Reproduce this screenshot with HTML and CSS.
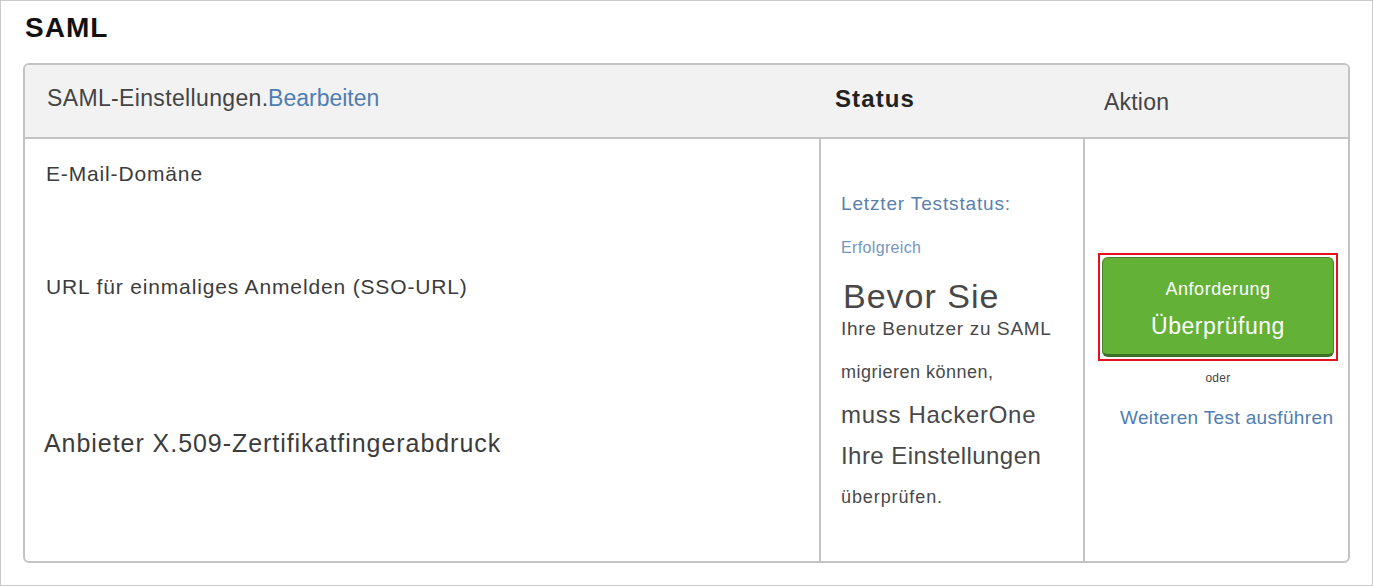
FILE: index.html
```html
<!DOCTYPE html>
<html lang="de">
<head>
<meta charset="utf-8">
<title>SAML</title>
<link rel="stylesheet" href="styles.css">
</head>
<body>
<div class="frame">
  <h1 class="title">SAML</h1>
  <div class="card">
    <div class="head">
      <div class="hc hc1">SAML-Einstellungen<span class="dot">.</span><a class="link edit">Bearbeiten</a></div>
      <div class="hc hc2">Status</div>
      <div class="hc hc3">Aktion</div>
    </div>
    <div class="body">
      <div class="cell c1">
        <div class="field f1">E-Mail-Domäne</div>
        <div class="field f2">URL für einmaliges Anmelden (SSO-URL)</div>
        <div class="field f3">Anbieter X.509-Zertifikatfingerabdruck</div>
      </div>
      <div class="cell c2">
        <div class="s s1">Letzter Teststatus:</div>
        <div class="s s2">Erfolgreich</div>
        <div class="s s3">Bevor Sie</div>
        <div class="s s4">Ihre Benutzer zu SAML</div>
        <div class="s s5">migrieren können,</div>
        <div class="s s6">muss HackerOne</div>
        <div class="s s7">Ihre Einstellungen</div>
        <div class="s s8">überprüfen.</div>
      </div>
      <div class="cell c3">
        <div class="redbox">
          <div class="btn">
            <span class="b1">Anforderung</span>
            <span class="b2">Überprüfung</span>
          </div>
        </div>
        <div class="oder">oder</div>
        <a class="link weiter">Weiteren Test ausführen</a>
      </div>
    </div>
  </div>
</div>
</body>
</html>
```

FILE: styles.css
```css
html, body {
  margin: 0;
  padding: 0;
  background: #ffffff;
}

body {
  font-family: "Liberation Sans", Arial, sans-serif;
  color: #444444;
}

.frame {
  width: 1373px;
  height: 586px;
  box-sizing: border-box;
  border: 1px solid #cacaca;
  padding: 0 22px;
}

.title {
  margin: 12px 0 20px 2px;
  font-size: 28px;
  line-height: 30px;
  font-weight: bold;
  letter-spacing: 1px;
  color: #111111;
}

.card {
  height: 500px;
  box-sizing: border-box;
  border: 2px solid #c3c3c3;
  border-radius: 6px;
  overflow: hidden;
  display: flex;
  flex-direction: column;
}

.head {
  height: 74px;
  box-sizing: border-box;
  background: #f2f2f2;
  border-bottom: 2px solid #c3c3c3;
  display: flex;
  align-items: flex-start;
}

.hc {
  box-sizing: border-box;
  font-size: 23px;
  line-height: 26px;
}

.hc1 {
  width: 796px;
  padding: 20px 0 0 22px;
  letter-spacing: 0.35px;
  color: #444444;
}

.dot {
  letter-spacing: 0;
}

.link {
  color: #4f7db2;
  text-decoration: none;
}

.edit {
  letter-spacing: 0;
}

.hc2 {
  width: 264px;
  padding: 21px 0 0 14px;
  font-size: 24px;
  font-weight: bold;
  letter-spacing: 1.1px;
  color: #222222;
}

.hc3 {
  flex: 1;
  padding: 24px 0 0 19px;
  letter-spacing: 0.2px;
  color: #444444;
}

.body {
  flex: 1;
  display: grid;
  grid-template-columns: 796px 264px 1fr;
}

.cell {
  box-sizing: border-box;
}

.c1, .c2 {
  border-right: 2px solid #c3c3c3;
}

.c1 {
  padding: 23px 0 0 21px;
}

.field {
  font-size: 21px;
  line-height: 24px;
  letter-spacing: 0.85px;
  color: #3c3c3c;
}

.f2 {
  margin-top: 89px;
}

.f3 {
  margin-top: 130px;
  margin-left: -2px;
  font-size: 25px;
  line-height: 28px;
  letter-spacing: 0.95px;
}

.c2 {
  padding: 53px 0 0 20px;
}

.s {
  color: #484848;
  white-space: nowrap;
}

.s1 {
  font-size: 19px;
  line-height: 24px;
  letter-spacing: 0.85px;
  color: #5a80ad;
}

.s2 {
  margin-top: 22px;
  font-size: 16px;
  line-height: 20px;
  letter-spacing: 0.35px;
  color: #7696bd;
}

.s3 {
  margin-top: 20px;
  margin-left: 2px;
  font-size: 34px;
  line-height: 36px;
  letter-spacing: 1px;
}

.s4 {
  margin-top: 4px;
  font-size: 19px;
  line-height: 22px;
  letter-spacing: 0.67px;
}

.s5 {
  margin-top: 21px;
  font-size: 18px;
  line-height: 22px;
  letter-spacing: 0.5px;
}

.s6 {
  margin-top: 19px;
  font-size: 24px;
  line-height: 26px;
  letter-spacing: 0.7px;
}

.s7 {
  margin-top: 15px;
  font-size: 24px;
  line-height: 26px;
  letter-spacing: 0.45px;
}

.s8 {
  margin-top: 17px;
  font-size: 18px;
  line-height: 22px;
  letter-spacing: 0.9px;
}

.c3 {
  padding: 114px 0 0 13px;
}

.redbox {
  width: 240px;
  height: 108px;
  box-sizing: border-box;
  border: 2px solid #e3121b;
  padding: 2px;
}

.btn {
  height: 100px;
  box-sizing: border-box;
  background: #63b136;
  border: 1px solid #4a8330;
  border-bottom: 3px solid #3c7024;
  border-radius: 6px;
  color: #ffffff;
  display: flex;
  flex-direction: column;
  align-items: center;
  padding-top: 20px;
}

.b1 {
  font-size: 18px;
  line-height: 22px;
  letter-spacing: 0.55px;
}

.b2 {
  margin-top: 12px;
  font-size: 23px;
  line-height: 28px;
  letter-spacing: 0.55px;
}

.oder {
  width: 240px;
  margin-top: 9px;
  text-align: center;
  font-size: 12px;
  line-height: 16px;
  letter-spacing: 0.3px;
  color: #444444;
}

.weiter {
  display: block;
  margin: 21px 0 0 22px;
  font-size: 19px;
  line-height: 22px;
  letter-spacing: 0.35px;
  white-space: nowrap;
}
```
